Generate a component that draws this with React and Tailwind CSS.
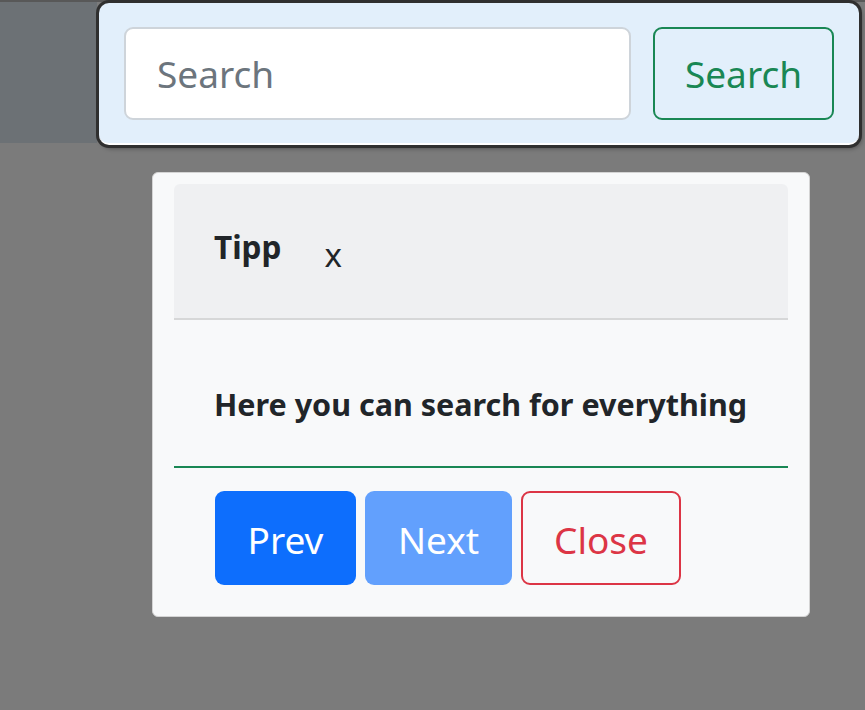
import React from 'react';

const FONT = { fontFamily: '"Noto Sans", "Open Sans", sans-serif' };

// Highlighted search bar (tour target)
const SearchBar = () => (
  <div className="flex items-start">
    <div className="h-[141px] w-[97px] bg-[#6c7175]" />
    <div className="ml-[2px] mt-[1px] flex h-[142px] w-[760px] items-start gap-[22px] rounded-[10px] border-b-[2px] border-white bg-[#e2effb] pl-[25px] pt-[24px] shadow-[0_0_0_3px_#2f2f2f,2px_3px_5px_rgba(0,0,0,0.45)]">
      <div className="flex h-[93px] w-[507px] items-center rounded-[9px] border-2 border-[#ced4da] bg-white pl-[31px] text-[37px] text-[#6c757d]">
        Search
      </div>
      <button className="flex h-[93px] w-[181px] items-center justify-center rounded-[9px] border-2 border-[#198754] text-[37px] text-[#198754]">
        Search
      </button>
    </div>
  </div>
);

// Tour popover card
const TourPopover = () => (
  <div className="ml-[152px] mt-[27px] h-[445px] w-[658px] rounded-[6px] border border-[#d4d4d4] bg-[#f8f9fa] px-[21px] pt-[11px]">
    {/* Header */}
    <div className="flex h-[136px] items-center rounded-t-[6px] border-b-2 border-[#d6d7d8] bg-[#eff0f2] pl-[40px] text-[#212529]">
      <span className="mb-[8px] text-[31.5px] font-bold">Tipp</span>
      <span className="ml-[43px] mt-[8px] text-[33px]">x</span>
    </div>

    {/* Body */}
    <div className="flex h-[148px] items-center border-b-2 border-[#198754] pl-[40px] pt-[24px] text-[30.5px] font-bold text-[#212529]">
      Here you can search for everything
    </div>

    {/* Footer */}
    <div className="flex gap-[9px] pl-[41px] pt-[23px]">
      <button className="h-[94px] w-[141px] rounded-[9px] bg-[#0d6efd] pt-[4px] text-[37px] text-white">Prev</button>
      <button className="h-[94px] w-[147px] rounded-[9px] bg-[#62a0fd] pt-[4px] text-[37px] text-white">Next</button>
      <button className="h-[94px] w-[160px] rounded-[9px] border-2 border-[#dc3545] pt-[4px] text-[37px] text-[#dc3545]">Close</button>
    </div>
  </div>
);

export default function App() {
  return (
    <div className="flex h-[710px] w-[865px] flex-col overflow-hidden bg-[#7b7b7b]" style={FONT}>
      <div className="h-[2px] bg-[#585858]" />
      <SearchBar />
      <TourPopover />
    </div>
  );
}
